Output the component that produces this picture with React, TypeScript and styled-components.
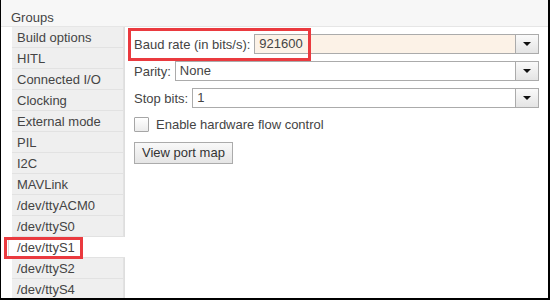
import styled, { createGlobalStyle } from "styled-components";

const GlobalStyle = createGlobalStyle`
  html, body {
    margin: 0;
    padding: 0;
    background: #ffffff;
  }
  * {
    box-sizing: border-box;
  }
`;

const Frame = styled.div`
  width: 550px;
  height: 300px;
  display: flex;
  flex-direction: column;
  background: #fbfbfb;
  border-left: 1px solid #000;
  border-right: 2px solid #000;
  border-bottom: 2px solid #000;
  font-family: "Liberation Sans", Arial, sans-serif;
  font-size: 13px;
  color: #444;
  overflow: hidden;
`;

const Header = styled.div`
  height: 27px;
  flex: none;
  padding: 10px 0 0 10px;
  line-height: 15px;
  background: #f7f7f7;
  border-bottom: 1px solid #e6e6e6;
`;

const Body = styled.div`
  flex: 1;
  display: flex;
  min-height: 0;
`;

const Sidebar = styled.ul`
  list-style: none;
  margin: 0;
  padding: 0 0 0 11px;
  width: 123px;
  flex: none;
  background: #ffffff;
`;

const GroupItem = styled.li<{ $selected?: boolean }>`
  position: relative;
  height: 21px;
  line-height: 20px;
  padding: 1px 0 0 5px;
  white-space: nowrap;
  border-bottom: 1px solid #e2e2e2;
  border-right: ${(p) => (p.$selected ? "none" : "1px solid #e2e2e2")};
  background: ${(p) => (p.$selected ? "#ffffff" : "#efefef")};
  margin-right: ${(p) => (p.$selected ? "-1px" : "0")};
  z-index: ${(p) => (p.$selected ? 1 : 0)};
  &::before {
    content: "";
    display: ${(p) => (p.$selected ? "block" : "none")};
    position: absolute;
    left: -4px;
    top: 0;
    bottom: 0;
    border-left: 1px solid #d8d8d8;
  }
`;

const Highlight = styled.div<{ $left: number; $top: number; $w: number; $h: number }>`
  position: absolute;
  left: ${(p) => p.$left}px;
  top: ${(p) => p.$top}px;
  width: ${(p) => p.$w}px;
  height: ${(p) => p.$h}px;
  border: 3px solid #ea3a3f;
  pointer-events: none;
  z-index: 2;
`;

const Panel = styled.div`
  position: relative;
  flex: 1;
  background: #ffffff;
  border-left: 1px solid #dedede;
  padding: 7px 9px 0 9px;
  display: flex;
  flex-direction: column;
`;

const FieldRow = styled.div`
  display: flex;
  align-items: center;
  gap: 4px;
  height: 20px;
  margin-bottom: 7px;
  white-space: nowrap;
`;

const Combo = styled.div<{ $tint?: boolean }>`
  flex: 1;
  height: 20px;
  display: flex;
  border: 1px solid #ababab;
  background: ${(p) => (p.$tint ? "#fcf2e7" : "#ffffff")};
`;

const ComboValue = styled.div`
  flex: 1;
  padding-left: 4px;
  line-height: 18px;
  color: #444;
`;

const ComboButton = styled.div`
  width: 23px;
  flex: none;
  display: flex;
  align-items: center;
  justify-content: center;
  border-left: 1px solid #ababab;
  background: linear-gradient(#fafafa, #e4e4e4);
`;

const Arrow = styled.span`
  width: 0;
  height: 0;
  border-left: 4px solid transparent;
  border-right: 4px solid transparent;
  border-top: 4px solid #111;
`;

const CheckRow = styled.label`
  display: flex;
  align-items: center;
  gap: 7px;
  height: 16px;
  margin-top: 1px;
  margin-bottom: 10px;
`;

const CheckBox = styled.span`
  width: 15px;
  height: 15px;
  border: 1px solid #a6a6a6;
  border-radius: 1px;
  background: linear-gradient(#ffffff, #ececec);
`;

const Button = styled.div`
  align-self: flex-start;
  height: 22px;
  padding: 0 7px;
  line-height: 20px;
  border: 1px solid #ababab;
  background: linear-gradient(#f9f9f9, #e5e5e5);
  color: #333;
`;

const groups = [
  "Build options",
  "HITL",
  "Connected I/O",
  "Clocking",
  "External mode",
  "PIL",
  "I2C",
  "MAVLink",
  "/dev/ttyACM0",
  "/dev/ttyS0",
  "/dev/ttyS1",
  "/dev/ttyS2",
  "/dev/ttyS4",
];

const selectedGroup = "/dev/ttyS1";

export default function App() {
  return (
    <>
      <GlobalStyle />
      <Frame>
        <Header>Groups</Header>
        <Body>
          <Sidebar>
            {groups.map((g) => (
              <GroupItem key={g} $selected={g === selectedGroup}>
                {g}
                {g === selectedGroup && <Highlight $left={-8} $top={0} $w={79} $h={22} />}
              </GroupItem>
            ))}
          </Sidebar>
          <Panel>
            <Highlight $left={3} $top={1} $w={183} $h={33} />
            <FieldRow>
              <span>Baud rate (in bits/s):</span>
              <Combo $tint>
                <ComboValue>921600</ComboValue>
                <ComboButton>
                  <Arrow />
                </ComboButton>
              </Combo>
            </FieldRow>
            <FieldRow>
              <span>Parity:</span>
              <Combo>
                <ComboValue>None</ComboValue>
                <ComboButton>
                  <Arrow />
                </ComboButton>
              </Combo>
            </FieldRow>
            <FieldRow>
              <span>Stop bits:</span>
              <Combo>
                <ComboValue>1</ComboValue>
                <ComboButton>
                  <Arrow />
                </ComboButton>
              </Combo>
            </FieldRow>
            <CheckRow>
              <CheckBox />
              <span>Enable hardware flow control</span>
            </CheckRow>
            <Button>View port map</Button>
          </Panel>
        </Body>
      </Frame>
    </>
  );
}
